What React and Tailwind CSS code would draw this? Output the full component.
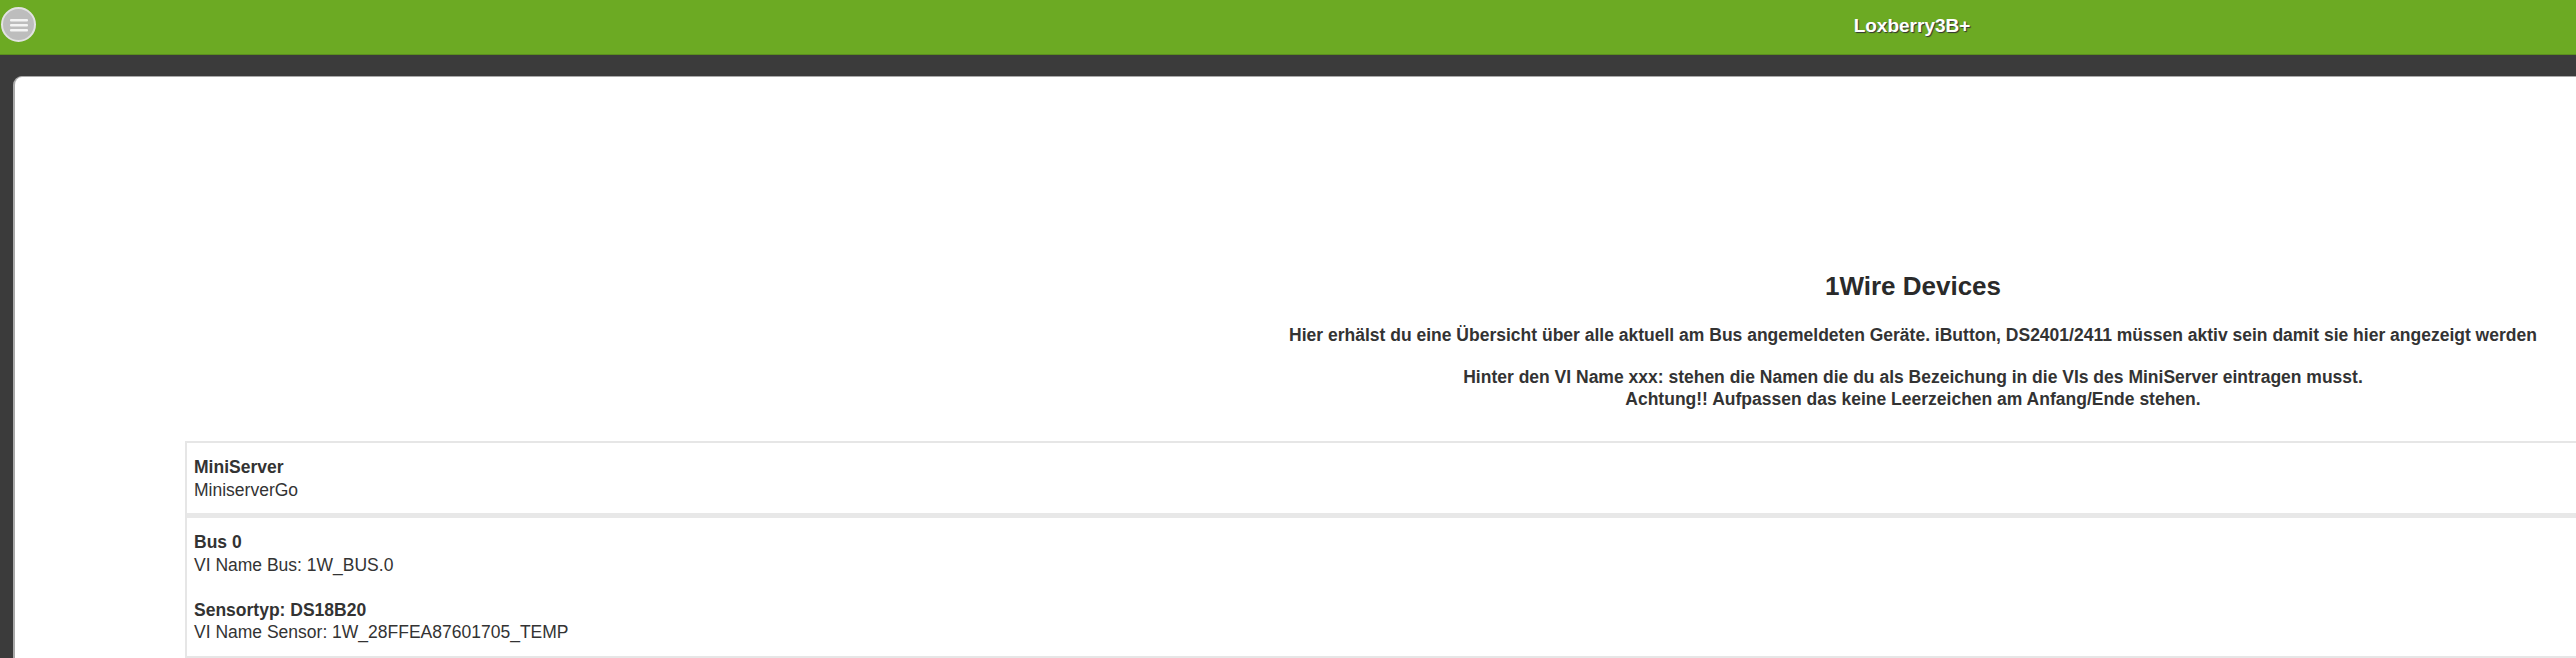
import React from 'react';

const MenuButton = () => (
  <button className="absolute left-[1px] top-[7px] w-[35px] h-[35px] rounded-full bg-[#bdbdbd] border-2 border-[#e2e2e2] flex items-center justify-center">
    <svg width="20" height="16" viewBox="0 0 20 16">
      <rect x="1" y="2" width="18" height="2.5" rx="1" fill="#f4f4f4" />
      <rect x="1" y="7" width="18" height="2.5" rx="1" fill="#f4f4f4" />
      <rect x="1" y="12" width="18" height="2.5" rx="1" fill="#f4f4f4" />
    </svg>
  </button>
);

const App = () => {
  return (
    <div className="w-full h-[658px] overflow-hidden bg-[#3b3b3b] text-[#333] font-['Liberation_Sans',Arial,sans-serif]">
      <div className="w-[3824px]">
        {/* Header */}
        <div className="relative h-[55px] bg-[#6caa23] border-b border-[#5b8f1d]">
          <MenuButton />
          <h1 className="text-center text-white font-bold text-[19px] leading-[52px] [text-shadow:1px_1px_1px_#333]">
            Loxberry3B+
          </h1>
        </div>

        {/* Content */}
        <div className="pt-[21px] pl-[13px] pr-[13px]">
          <div className="bg-white border-l-2 border-t border-[#a9a9a9] rounded-tl-[9px] pt-[193px] pb-[40px]">
            <h2 className="text-center font-bold text-[26px] leading-[32px] text-[#2a2a2a]">1Wire Devices</h2>

            <p className="mt-[22px] text-center font-bold text-[17.5px] leading-[22px]">
              Hier erhälst du eine Übersicht über alle aktuell am Bus angemeldeten Geräte. iButton, DS2401/2411 müssen aktiv sein damit sie hier angezeigt werden
            </p>

            <p className="mt-[20px] text-center font-bold text-[17.5px] leading-[22px]">
              Hinter den VI Name xxx: stehen die Namen die du als Bezeichung in die VIs des MiniServer eintragen musst.
              <br />
              Achtung!! Aufpassen das keine Leerzeichen am Anfang/Ende stehen.
            </p>

            <div className="mt-[31px] mx-[170px] border-2 border-[#e6e6e6] divide-y-[5px] divide-[#e8e8e8] text-[17.5px] leading-[22.5px]">
              <div className="pl-[7px] pt-[13px] pb-[12px]">
                <div className="font-bold">MiniServer</div>
                <div>MiniserverGo</div>
              </div>
              <div className="pl-[7px] pt-[13px] pb-[12px]">
                <div className="font-bold">Bus 0</div>
                <div>VI Name Bus: 1W_BUS.0</div>
                <div className="h-[22.5px]" />
                <div className="font-bold">Sensortyp: DS18B20</div>
                <div>VI Name Sensor: 1W_28FFEA87601705_TEMP</div>
              </div>
            </div>
          </div>
        </div>
      </div>
    </div>
  );
};

export default App;
